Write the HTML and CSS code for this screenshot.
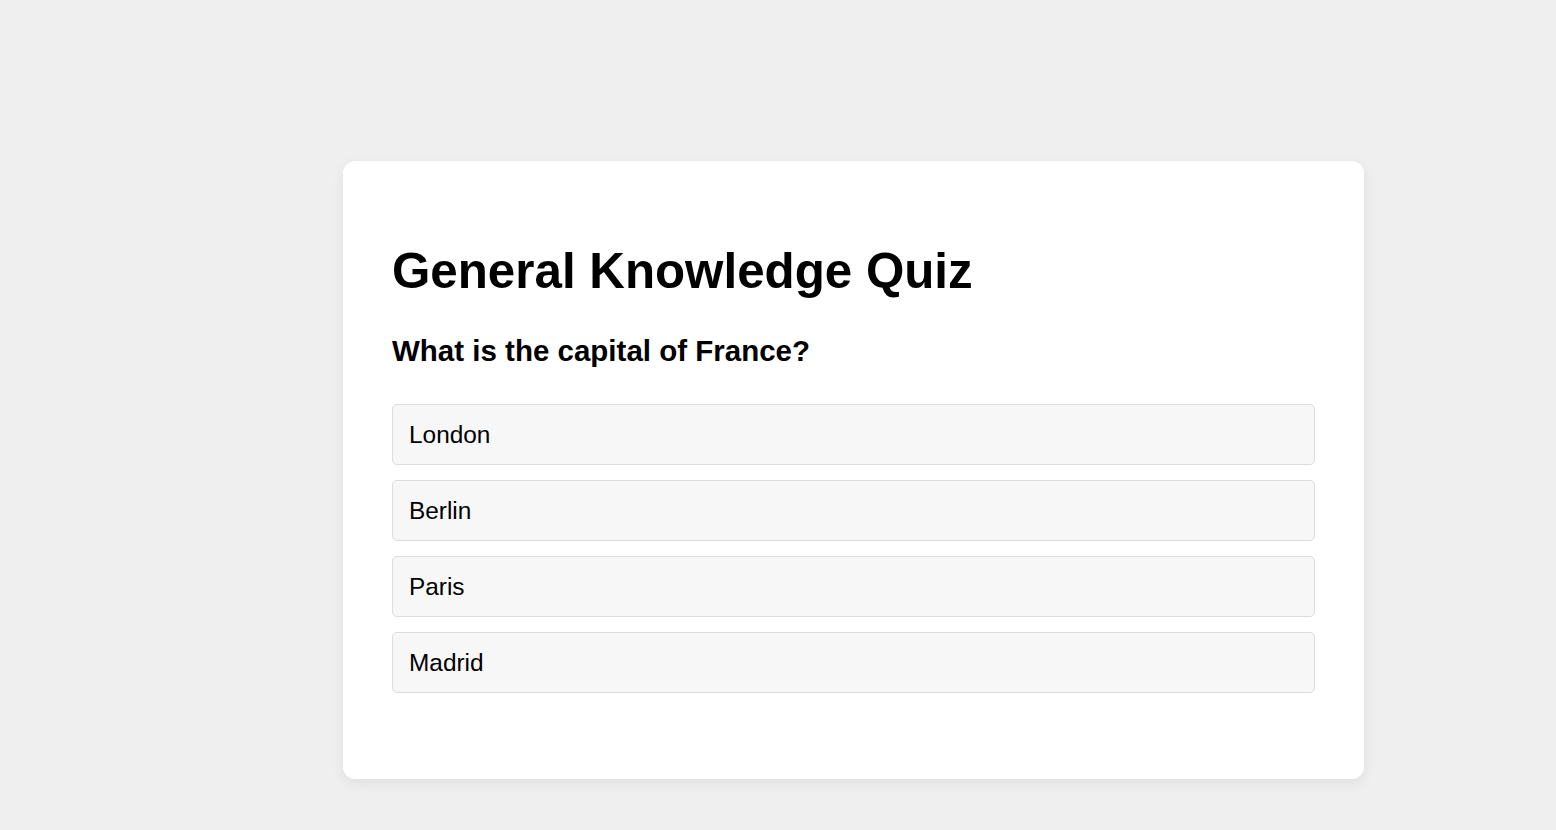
FILE: index.html
```html
<!DOCTYPE html>
<html lang="en">
<head>
<meta charset="utf-8">
<title>General Knowledge Quiz</title>
<link rel="stylesheet" href="styles.css">
</head>
<body>
  <main class="quiz-card">
    <h1 class="quiz-title">General Knowledge Quiz</h1>
    <h2 class="quiz-question">What is the capital of France?</h2>
    <div class="options">
      <div class="option">London</div>
      <div class="option">Berlin</div>
      <div class="option">Paris</div>
      <div class="option">Madrid</div>
    </div>
  </main>
</body>
</html>
```
FILE: styles.css
```css
html, body {
  margin: 0;
  padding: 0;
}
body {
  background: #efefef;
  font-family: "Liberation Sans", Arial, Helvetica, sans-serif;
  color: #000;
  padding: 161px 0 0 343px;
  min-height: 830px;
  box-sizing: border-box;
}
.quiz-card {
  width: 1021px;
  box-sizing: border-box;
  background: #ffffff;
  border-radius: 12px;
  box-shadow: 0 4px 14px rgba(0, 0, 0, 0.07);
  padding: 49px 49px 49px;
}
.quiz-title {
  font-size: 49.3px;
  font-weight: bold;
  line-height: 56px;
  margin: 33px 0 35px;
}
.quiz-question {
  font-size: 29.5px;
  font-weight: bold;
  line-height: 33px;
  margin: 0 0 37px;
}
.options {
  display: flex;
  flex-direction: column;
  gap: 15px;
  margin-bottom: 37px;
}
.option {
  background: #f7f7f7;
  border: 1px solid #dcdcdc;
  border-radius: 5px;
  padding: 16px 16px;
  font-size: 24.4px;
  line-height: 27px;
}
```
